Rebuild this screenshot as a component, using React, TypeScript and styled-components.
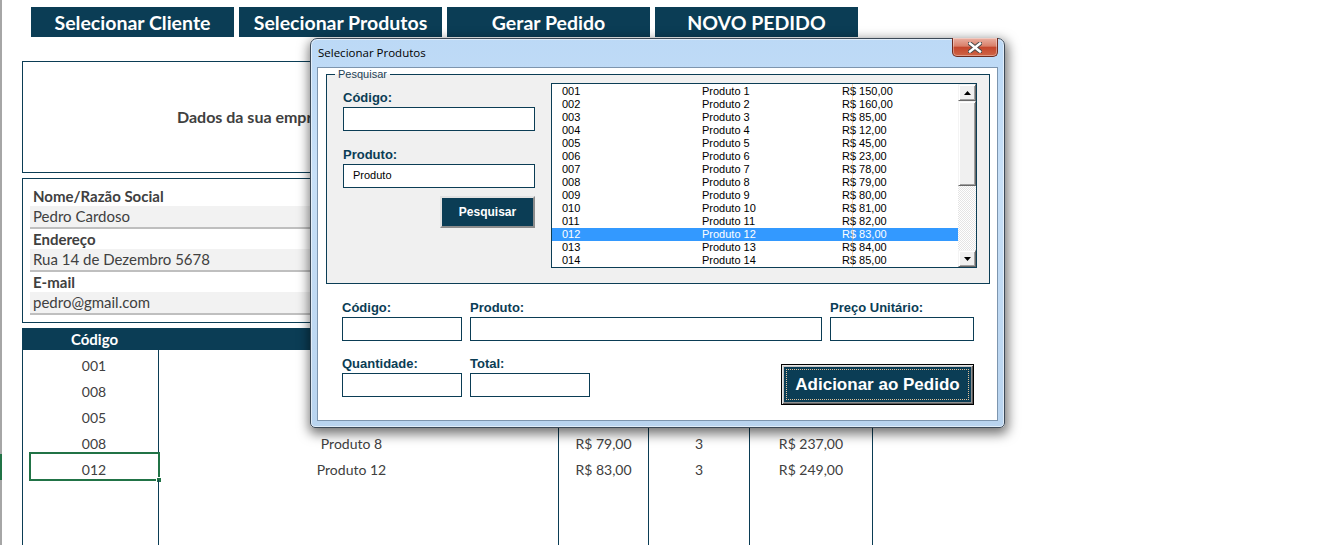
import React from 'react'
import styled, { createGlobalStyle } from 'styled-components'

interface iItem {
    code: string
    name: string
    price: string
}

interface iOrder {
    code: string
    name?: string
    price?: string
    qty?: string
    total?: string
}

const products: iItem[] = [
    { code: "001", name: "Produto 1", price: "R$ 150,00" },
    { code: "002", name: "Produto 2", price: "R$ 160,00" },
    { code: "003", name: "Produto 3", price: "R$ 85,00" },
    { code: "004", name: "Produto 4", price: "R$ 12,00" },
    { code: "005", name: "Produto 5", price: "R$ 45,00" },
    { code: "006", name: "Produto 6", price: "R$ 23,00" },
    { code: "007", name: "Produto 7", price: "R$ 78,00" },
    { code: "008", name: "Produto 8", price: "R$ 79,00" },
    { code: "009", name: "Produto 9", price: "R$ 80,00" },
    { code: "010", name: "Produto 10", price: "R$ 81,00" },
    { code: "011", name: "Produto 11", price: "R$ 82,00" },
    { code: "012", name: "Produto 12", price: "R$ 83,00" },
    { code: "013", name: "Produto 13", price: "R$ 84,00" },
    { code: "014", name: "Produto 14", price: "R$ 85,00" },
]

// the first rows sit under the dialog, only the code column shows
const orders: iOrder[] = [
    { code: "001" },
    { code: "008" },
    { code: "005" },
    { code: "008", name: "Produto 8", price: "R$ 79,00", qty: "3", total: "R$ 237,00" },
    { code: "012", name: "Produto 12", price: "R$ 83,00", qty: "3", total: "R$ 249,00" },
]

const topButtons = ["Selecionar Cliente", "Selecionar Produtos", "Gerar Pedido", "NOVO PEDIDO"]

const NAVY = "#0b3d55"
const COLS = "136px 400px 90px 101px 123px"

const Arrow = ({ down }: { down?: boolean }) => (
    <svg width="7" height="4" viewBox="0 0 7 4">
        {down ? <polygon points="0,0 7,0 3.5,4" fill="#000" /> : <polygon points="0,4 7,4 3.5,0" fill="#000" />}
    </svg>
)

const CloseGlyph = () => (
    <svg width="14" height="11" viewBox="0 0 14 11">
        <path d="M2 1.5 L12 9.5 M12 1.5 L2 9.5" stroke="#4a4a4a" strokeWidth="4.4" strokeLinecap="square" />
        <path d="M2 1.5 L12 9.5 M12 1.5 L2 9.5" stroke="#fff" strokeWidth="2.4" strokeLinecap="square" />
    </svg>
)

const ProductDialog = () => {
    return (
        <Dialog>
            <TitleBar>
                <Title>Selecionar Produtos</Title>
                <CloseButton><CloseGlyph /></CloseButton>
            </TitleBar>

            <ClientArea>
                <SearchGroup>
                    <Legend>Pesquisar</Legend>
                    <SearchForm>
                        <FormLabel>Código:</FormLabel>
                        <TextBox />
                        <FormLabel style={{ marginTop: 16 }}>Produto:</FormLabel>
                        <TextBox>Produto</TextBox>
                        <SearchButton>Pesquisar</SearchButton>
                    </SearchForm>

                    <ListBox>
                        <ListRows>
                            {products.map((p) => (
                                <ListRow key={p.code} $selected={p.code === "012"}>
                                    <span>{p.code}</span>
                                    <span>{p.name}</span>
                                    <span>{p.price}</span>
                                </ListRow>
                            ))}
                        </ListRows>
                        <ScrollBar>
                            <ScrollButton><Arrow /></ScrollButton>
                            <Thumb />
                            <Track />
                            <ScrollButton><Arrow down /></ScrollButton>
                        </ScrollBar>
                    </ListBox>
                </SearchGroup>

                <OrderForm>
                    <FormRow>
                        <Field $w={120}>
                            <FormLabel>Código:</FormLabel>
                            <TextBox />
                        </Field>
                        <Field $w={352}>
                            <FormLabel>Produto:</FormLabel>
                            <TextBox />
                        </Field>
                        <Field $w={144}>
                            <FormLabel>Preço Unitário:</FormLabel>
                            <TextBox />
                        </Field>
                    </FormRow>
                    <FormRow style={{ marginTop: 15 }}>
                        <Field $w={120}>
                            <FormLabel>Quantidade:</FormLabel>
                            <TextBox />
                        </Field>
                        <Field $w={120}>
                            <FormLabel>Total:</FormLabel>
                            <TextBox />
                        </Field>
                        <AddButton>Adicionar ao Pedido</AddButton>
                    </FormRow>
                </OrderForm>
            </ClientArea>
        </Dialog>
    )
}

const App = () => {
    return (
        <>
            <GlobalStyle />
            <Page>
                <RowHeaderEdge />
                <Sheet>
                    <Toolbar>
                        {topButtons.map((t) => <SheetButton key={t}>{t}</SheetButton>)}
                    </Toolbar>

                    <CompanyBox>
                        <CompanyText>Dados da sua empresa</CompanyText>
                    </CompanyBox>

                    <ClientBox>
                        <ClientLabel>Nome/Razão Social</ClientLabel>
                        <ClientValue>Pedro Cardoso</ClientValue>
                        <ClientLabel>Endereço</ClientLabel>
                        <ClientValue>Rua 14 de Dezembro 5678</ClientValue>
                        <ClientLabel>E-mail</ClientLabel>
                        <ClientValue>pedro@gmail.com</ClientValue>
                    </ClientBox>

                    <OrderTable>
                        <HeaderRow>
                            <HeadCell $first>Código</HeadCell>
                            <HeadCell />
                            <HeadCell />
                            <HeadCell />
                            <HeadCell />
                        </HeaderRow>

                        {orders.map((o, i) => (
                            <BodyRow key={i}>
                                <Cell $first>
                                    {o.code}
                                    {i === orders.length - 1 && (
                                        <>
                                            <Selection><Handle /></Selection>
                                            <RowMark />
                                        </>
                                    )}
                                </Cell>
                                <Cell $shift>{o.name}</Cell>
                                <Cell>{o.price}</Cell>
                                <Cell>{o.qty}</Cell>
                                <Cell>{o.total}</Cell>
                            </BodyRow>
                        ))}

                        <FillerRow>
                            <Cell /><Cell /><Cell /><Cell /><Cell />
                        </FillerRow>
                    </OrderTable>
                </Sheet>

                <ProductDialog />
            </Page>
        </>
    )
}

export default App

const GlobalStyle = createGlobalStyle`
html, body {
    margin: 0;
    padding: 0;
    background: #fff;
}
* {
    box-sizing: border-box;
}
`

const Page = styled.div`
position: relative;
display: flex;
width: 1318px;
height: 545px;
overflow: hidden;
background: #fff;
font-family: "Lato", "Open Sans", sans-serif;
color: #404040;
`

const RowHeaderEdge = styled.div`
width: 2px;
flex-shrink: 0;
background: #a6a6a6;
`

const Sheet = styled.div`
flex: 1;
display: flex;
flex-direction: column;
padding-left: 20px;
`

const Toolbar = styled.div`
display: flex;
gap: 5px;
padding: 7px 0 0 9px;
`

const SheetButton = styled.div`
width: 203px;
height: 30px;
background: ${NAVY};
color: #fff;
font-weight: 700;
font-size: 19.5px;
display: flex;
align-items: center;
justify-content: center;
`

const CompanyBox = styled.div`
width: 851px;
height: 112px;
margin-top: 24px;
border: 1px solid ${NAVY};
display: flex;
align-items: center;
padding: 0 0 2px 154px;
`

const CompanyText = styled.div`
font-weight: 700;
font-size: 16px;
`

const ClientBox = styled.div`
width: 851px;
height: 145px;
margin-top: 5px;
border: 1px solid ${NAVY};
padding: 7px 8px 7px 7px;
`

const ClientLabel = styled.div`
height: 20px;
line-height: 20px;
padding-left: 3px;
font-weight: 700;
font-size: 15px;
`

const ClientValue = styled.div`
height: 23px;
line-height: 21px;
padding-left: 3px;
font-size: 15px;
background: #f2f2f2;
border-bottom: 2px solid #bfbfbf;
`

const OrderTable = styled.div`
flex: 1;
width: 851px;
margin-top: 5px;
display: flex;
flex-direction: column;
border-left: 1px solid ${NAVY};
`

const HeaderRow = styled.div`
display: grid;
grid-template-columns: ${COLS};
height: 22px;
flex-shrink: 0;
background: ${NAVY};
`

const HeadCell = styled.div<{ $first?: boolean }>`
height: 22px;
line-height: 22px;
text-align: center;
padding-left: ${(p) => (p.$first ? "7px" : "0")};
color: #fff;
font-weight: 700;
font-size: 15px;
`

const BodyRow = styled.div`
display: grid;
grid-template-columns: ${COLS};
height: 26px;
flex-shrink: 0;
`

const FillerRow = styled.div`
flex: 1;
display: grid;
grid-template-columns: ${COLS};
`

const Cell = styled.div<{ $first?: boolean; $shift?: boolean }>`
position: relative;
display: flex;
align-items: flex-end;
justify-content: center;
padding-left: ${(p) => (p.$first ? "7px" : "0")};
padding-right: ${(p) => (p.$shift ? "14px" : "0")};
padding-bottom: 1px;
border-right: 1px solid ${NAVY};
font-size: 14px;
line-height: 18px;
`

const Selection = styled.div`
position: absolute;
left: 6px;
right: -2px;
top: -2px;
bottom: -1px;
border: 2px solid #217346;
`

const Handle = styled.div`
position: absolute;
right: -4px;
bottom: -4px;
width: 6px;
height: 6px;
background: #217346;
border: 1px solid #fff;
`

const RowMark = styled.div`
position: absolute;
left: -23px;
top: 0;
bottom: 0;
width: 2px;
background: #217346;
`

/* dialog */

const Dialog = styled.div`
position: absolute;
left: 310px;
top: 38px;
width: 695px;
height: 390px;
display: flex;
flex-direction: column;
padding: 0 6px 6px 6px;
border: 1px solid #3d4a58;
border-radius: 7px 7px 5px 5px;
background: linear-gradient(180deg, #bcd9f6 0%, #c8e0f7 35%, #b9d4ef 100%);
box-shadow: inset 0 0 0 1px rgba(255, 255, 255, 0.55), 1px 4px 12px 2px rgba(0, 0, 0, 0.55);
font-family: "Liberation Sans", Arial, sans-serif;
`

const TitleBar = styled.div`
height: 28px;
display: flex;
align-items: flex-start;
justify-content: space-between;
`

const Title = styled.div`
margin-top: 6px;
padding-left: 1px;
font-family: "Open Sans", "Noto Sans", sans-serif;
font-size: 11.5px;
color: #000;
`

const CloseButton = styled.div`
width: 46px;
height: 19px;
margin-top: -1px;
display: flex;
align-items: center;
justify-content: center;
border: 1px solid #6e2b1f;
border-top: none;
border-radius: 0 0 5px 5px;
background: linear-gradient(180deg, #eab0a2 0%, #d9806a 45%, #c5472d 52%, #cf6546 100%);
box-shadow: inset 0 0 0 1px rgba(255, 255, 255, 0.35);
`

const ClientArea = styled.div`
flex: 1;
background: #fff;
border: 1px solid #7d95ae;
`

const SearchGroup = styled.fieldset`
margin: 0 8px;
padding: 2px 12px 15px 16px;
border: 1px solid ${NAVY};
background: #f0f0f0;
display: flex;
gap: 16px;
`

const Legend = styled.legend`
margin-left: -8px;
padding: 0 3px;
font-size: 11px;
line-height: 13px;
color: #1c3f55;
`

const SearchForm = styled.div`
width: 192px;
display: flex;
flex-direction: column;
padding-top: 7px;
`

const FormLabel = styled.div`
height: 16px;
line-height: 16px;
margin-bottom: 1px;
font-weight: 700;
font-size: 13px;
color: ${NAVY};
white-space: nowrap;
`

const TextBox = styled.div`
height: 24px;
border: 1px solid ${NAVY};
background: #fff;
padding-left: 9px;
font-size: 11px;
line-height: 20px;
color: #000;
`

const SearchButton = styled.div`
align-self: flex-end;
width: 95px;
height: 32px;
margin-top: 8px;
display: flex;
align-items: center;
justify-content: center;
background: ${NAVY};
border: 2px solid;
border-color: #e2e2e2 #8c8c8c #8c8c8c #e2e2e2;
color: #fff;
font-weight: 700;
font-size: 12px;
`

const ListBox = styled.div`
width: 426px;
height: 185px;
display: flex;
border: 1px solid ${NAVY};
background: #fff;
`

const ListRows = styled.div`
position: relative;
flex: 1;
padding-top: 1px;

&::after {
    content: "";
    position: absolute;
    left: 300px;
    top: 0;
    bottom: 0;
    width: 1px;
    background: rgba(240, 160, 80, 0.45);
}
`

const ListRow = styled.div<{ $selected?: boolean }>`
display: grid;
grid-template-columns: 140px 140px 1fr;
height: 13px;
line-height: 13px;
padding-left: 10px;
font-size: 11px;
color: ${(p) => (p.$selected ? "#fff" : "#000")};
background: ${(p) => (p.$selected ? "#3399ff" : "transparent")};
`

const ScrollBar = styled.div`
width: 18px;
display: flex;
flex-direction: column;
`

const ScrollButton = styled.div`
height: 17px;
display: flex;
align-items: center;
justify-content: center;
background: #f0f0f0;
border: 1px solid;
border-color: #f4f4f4 #696969 #696969 #f4f4f4;
box-shadow: inset 1px 1px 0 #fff, inset -1px -1px 0 #a0a0a0;
`

const Thumb = styled(ScrollButton)`
height: 85px;
`

const Track = styled.div`
flex: 1;
background: repeating-conic-gradient(#ffffff 0 25%, #e4e4e4 0 50%) 0 0 / 2px 2px;
`

const OrderForm = styled.div`
padding: 16px 0 0 24px;
width: 656px;
`

const FormRow = styled.div`
display: flex;
gap: 8px;
`

const Field = styled.div<{ $w: number }>`
width: ${(p) => p.$w}px;
display: flex;
flex-direction: column;
`

const AddButton = styled.div`
position: relative;
margin-left: auto;
align-self: flex-end;
margin-bottom: -8px;
width: 193px;
height: 41px;
display: flex;
align-items: center;
justify-content: center;
background: ${NAVY};
border: 1px solid #000;
box-shadow: inset 1px 1px 0 #e6e6e6, inset -1px -1px 0 #5a5a5a, inset 2px 2px 0 #c4c4c4, inset -2px -2px 0 #909090;
color: #fff;
font-weight: 700;
font-size: 17px;

&::after {
    content: "";
    position: absolute;
    inset: 4px;
    border: 1px dotted #e0c29a;
}
`
